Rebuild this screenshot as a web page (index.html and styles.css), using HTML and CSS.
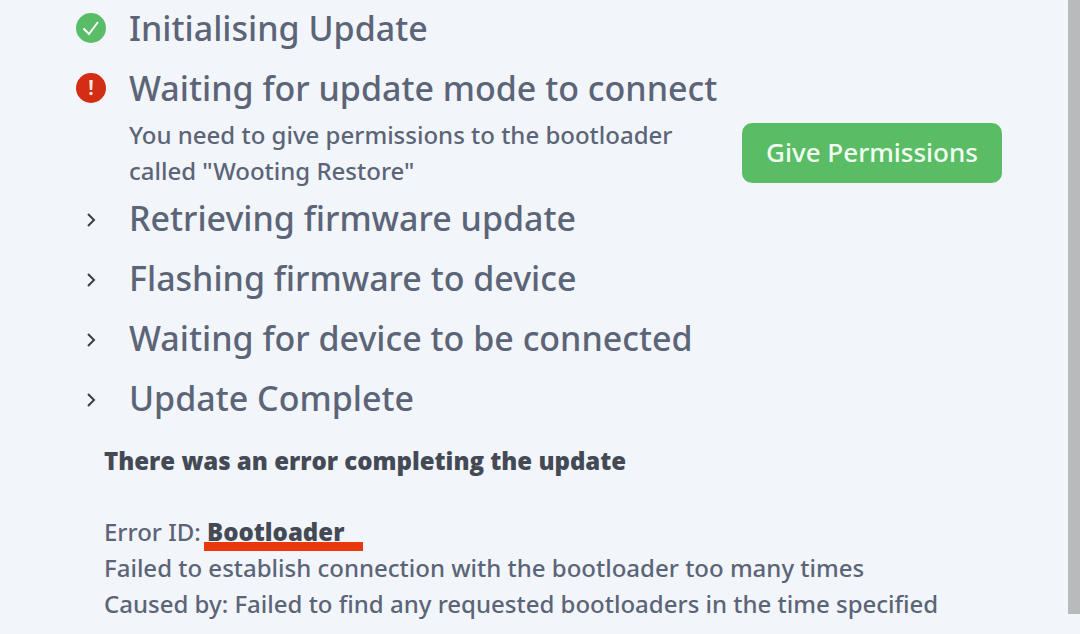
FILE: index.html
```html
<!DOCTYPE html>
<html lang="en">
<head>
  <meta charset="UTF-8" />
  <meta name="viewport" content="width=device-width, initial-scale=1.0"/>
  <title>Firmware Update</title>
  <link rel="stylesheet" href="styles.css">
</head>
<body>

  <main class="updater">
    <ul class="steps">
      <li class="step">
        <svg class="icon" viewBox="0 0 30 30" aria-label="Done">
          <circle cx="15" cy="15" r="15" fill="#58bd66"/>
          <path d="M7.500 15.500l5.500 5.500 9-12" fill="none" stroke="#fff" stroke-width="2"/>
        </svg>
        <h2>Initialising Update</h2>
      </li>
      <li class="step">
        <svg class="icon" viewBox="0 0 30 30" aria-label="Error">
          <circle cx="15" cy="15" r="15" fill="#d32d14"/>
          <path d="M13.300 7h3.400l-.5 10h-2.400z" fill="#ffe9e4"/>
          <circle cx="15" cy="20.500" r="1.700" fill="#ffe9e4"/>
        </svg>
        <h2>Waiting for update mode to connect</h2>
        <div class="details">
          <p>You need to give permissions to the bootloader called "Wooting Restore"</p>
          <button class="button" type="button">Give Permissions</button>
        </div>
      </li>
      <li class="step">
        <svg class="icon" viewBox="0 0 30 30"><path class="chevron" d="M12 11l6 6-6 6"/></svg>
        <h2>Retrieving firmware update</h2>
      </li>
      <li class="step">
        <svg class="icon" viewBox="0 0 30 30"><path class="chevron" d="M12 11l6 6-6 6"/></svg>
        <h2>Flashing firmware to device</h2>
      </li>
      <li class="step">
        <svg class="icon" viewBox="0 0 30 30"><path class="chevron" d="M12 11l6 6-6 6"/></svg>
        <h2>Waiting for device to be connected</h2>
      </li>
      <li class="step">
        <svg class="icon" viewBox="0 0 30 30"><path class="chevron" d="M12 11l6 6-6 6"/></svg>
        <h2>Update Complete</h2>
      </li>
    </ul>

    <section class="error">
      <h3>There was an error completing the update</h3>
      <p>Error ID: <strong class="error-id">Bootloader</strong></p>
      <p>Failed to establish connection with the bootloader too many times</p>
      <p>Caused by: Failed to find any requested bootloaders in the time specified</p>
    </section>
  </main>
  <div class="scrollbar"></div>

</body>
</html>
```
FILE: styles.css
```css
body {
  font-family: "Noto Sans", "Open Sans", sans-serif;
  font-weight: 500;
  background-color: #f2f6fa;
  color: #5c6478;
  display: flex;
  min-height: 100vh;
  margin: 0;
}

h2, h3, p {
  margin: 0;
}

.updater {
  flex: 1;
  padding: 0 66px 0 76px;
}

.steps {
  list-style: none;
  margin: -2px 0 0;
  padding: 0;
}

.step {
  display: grid;
  grid-template-columns: 30px 1fr;
  column-gap: 23px;
  align-items: center;
}

.step h2 {
  font-size: 34px;
  font-weight: 500;
  line-height: 60px;
}

.icon {
  width: 30px;
  height: 30px;
}

.chevron {
  fill: none;
  stroke: #3a3d45;
  stroke-width: 2;
}

.details {
  grid-column: 2;
  display: flex;
  justify-content: space-between;
  align-items: center;
  height: 70px;
}

.details p {
  width: 560px;
  font-size: 24px;
  line-height: 36px;
}

.button {
  background-color: #5abc64;
  color: #f2fff2;
  border: none;
  border-radius: 10px;
  width: 260px;
  height: 60px;
  padding: 0 0 2px;
  font: inherit;
  font-size: 26px;
  cursor: pointer;
}

.error {
  margin: 15px 0 0 28px;
  font-size: 24px;
  line-height: 36px;
}

.error h3 {
  font-family: "Open Sans", sans-serif;
  font-size: 24px;
  font-weight: 800;
  color: #444956;
  margin-bottom: 35px;
}

.error-id {
  position: relative;
  font-family: "Open Sans", sans-serif;
  font-weight: 800;
  color: #444956;
}

.error-id::after {
  content: "";
  position: absolute;
  left: -3px;
  right: -19px;
  bottom: -3px;
  height: 9px;
  background-color: #e8380c;
}

.scrollbar {
  width: 12px;
  margin-bottom: 20px;
  background-color: #b9babb;
}
```
